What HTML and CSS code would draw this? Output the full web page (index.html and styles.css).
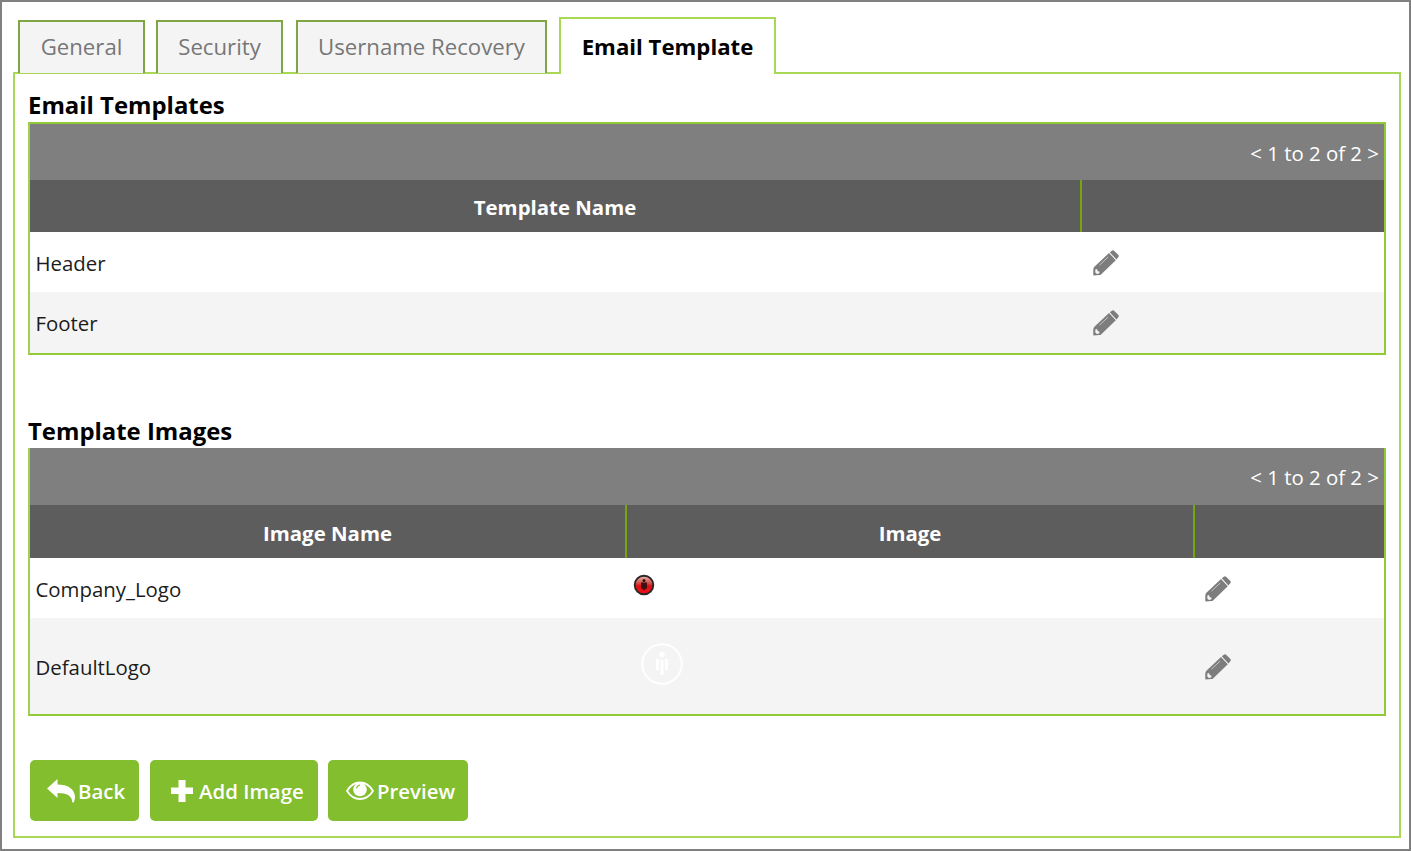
FILE: index.html
```
<!DOCTYPE html>
<html lang="en">
<head>
<meta charset="utf-8">
<title>Email Template</title>
<link rel="stylesheet" href="styles.css">
</head>
<body>
<svg class="defs" width="0" height="0" aria-hidden="true">
  <symbol id="pencil" viewBox="0 0 26 26">
    <path fill="currentColor" d="M16.800 2.300 18.900.7q1.200-.9 2.400.2l3.900 3.900q1.200 1.200.1 2.400l-1.900 2.400zM16 3l6.800 7.200L8.300 24.200q-.8.8-1.800.9L.4 25.500q-.3-3 0-6.700.2-1.200 1-2z"/>
    <path fill="none" stroke="#c4c4c4" stroke-width="1" d="M6.400 15.200 15.200 7"/>
    <path fill="#f4f4f4" d="M2.300 19.400 4 19l.6 2 2 .7-.5 1.900-2.200.400-1.600-1.600z"/>
  </symbol>
</svg>
<main class="window">
  <nav class="tabs">
    <a class="tab general"><span>General</span></a>
    <a class="tab security"><span>Security</span></a>
    <a class="tab username"><span>Username Recovery</span></a>
    <a class="tab active"><span>Email Template</span></a>
  </nav>
  <section class="panel">
    <h2 class="title">Email Templates</h2>
    <div class="grid templates">
      <div class="pager"><span>&lt; 1 to 2 of 2 &gt;</span></div>
      <div class="row head"><div>Template Name</div><div></div></div>
      <div class="row"><div>Header</div><div><svg class="pencil"><use href="#pencil"/></svg></div></div>
      <div class="row alt"><div>Footer</div><div><svg class="pencil"><use href="#pencil"/></svg></div></div>
    </div>
    <h2 class="title second">Template Images</h2>
    <div class="grid images">
      <div class="pager"><span>&lt; 1 to 2 of 2 &gt;</span></div>
      <div class="row head"><div>Image Name</div><div>Image</div><div></div></div>
      <div class="row"><div>Company_Logo</div>
        <div><svg class="logo-small" viewBox="0 0 22 22">
          <defs><linearGradient id="red" x2="0" y2="1"><stop offset="0" stop-color="#e9b9ae"/><stop offset=".4" stop-color="#d3504a"/><stop offset=".55" stop-color="#dc1014"/><stop offset="1" stop-color="#f0121c"/></linearGradient></defs>
          <circle cx="11" cy="11" r="9.300" fill="url(#red)" stroke="#2b2525" stroke-width="1.900"/>
          <circle cx="11" cy="6.600" r="1.500" fill="#301010"/>
          <path fill="#401012" d="M8 8.500h6v5.500l-1.500 1-1.500 1.500-1.500-1.500-1.500-1z"/>
        </svg></div>
        <div><svg class="pencil"><use href="#pencil"/></svg></div></div>
      <div class="row alt tall"><div>DefaultLogo</div>
        <div><svg class="logo-large" viewBox="0 0 42 42">
          <circle cx="21" cy="21" r="19.700" fill="none" stroke="#fff" stroke-width="2"/>
          <circle cx="21" cy="11.500" r="2.700" fill="#fff"/>
          <path stroke="#fff" stroke-width="3" d="M16.500 16v11M21 17v15M25.500 16v11"/>
        </svg></div>
        <div><svg class="pencil"><use href="#pencil"/></svg></div></div>
    </div>
    <div class="actions">
      <button class="button back"><svg viewBox="0 0 28 24"><path fill="#fff" d="M0 9.500 10.500 0v5.500c10 0 17.500 4.500 17.500 12.500 0 2-.5 4-1.500 5.500h-1.300C25.500 17 20 14 10.500 14v5z"/></svg><span>Back</span></button>
      <button class="button add"><svg viewBox="0 0 24 24"><path fill="#fff" d="M8.500 1h7v7.500H23v6.500h-7.500V23h-7v-8H1V8.500h7.500z"/></svg><span>Add Image</span></button>
      <button class="button preview"><svg viewBox="0 0 28 20"><path fill="none" stroke="#fff" stroke-width="1.800" d="M1 10C4.500 4 9 1.500 14 1.500S23.500 4 27 10c-3.500 5.500-8 8-13 8S4.500 15.500 1 10z"/><circle cx="14" cy="8.500" r="6.800" fill="#fff"/><path d="M10.500 7.500q.6-3 3.500-3.500" fill="none" stroke="#82be2d" stroke-width="1.200"/></svg><span>Preview</span></button>
    </div>
  </section>
</main>
</body>
</html>
```
FILE: styles.css
```
* { box-sizing: border-box; }
body { margin: 0; font-family: "Open Sans", sans-serif; font-size: 20.4px; color: #1c1c1c; }
.defs { position: absolute; }
.window { width: 1411px; height: 851px; border: 2px solid #808080; background: #fff; padding: 16px 8px 11px 11px; }
.tabs { display: flex; align-items: flex-end; height: 55px; padding-left: 5px; }
.tab { height: 53px; border: 2px solid #7fa645; border-bottom: 0; background: #f4f4f4; color: #777; font-size: 22.2px; line-height: 49px; text-align: center; white-space: nowrap; }
.general { width: 127px; margin-right: 11px; }
.security { width: 127px; margin-right: 13px; }
.username { width: 251px; margin-right: 12px; }
.active { width: 217px; height: 57px; margin-bottom: -1px; border-color: #a8d855; background: #fff; color: #000; font-weight: 700; line-height: 55px; position: relative; }
.panel { height: 766px; margin-top: -1px; border: 2px solid #a8d855; padding: 15px 14px 0 14px; }
.title { margin: 0 0 0 -1px; height: 33px; font-size: 23.9px; line-height: 32px; font-weight: 700; color: #000; white-space: nowrap; }
.second { margin-top: 60px; }
.grid { width: 1358px; margin-left: -1px; border: 2px solid #92ca37; border-left-color: #a0d050; }
.images { border-top: 0; }
.pager { display: flex; justify-content: flex-end; align-items: center; height: 56px; padding: 1px 5px 0 0; background: #7f7f7f; color: #fff; }
.images .pager { height: 57px; padding-top: 0; }
.row { display: grid; height: 60px; padding-top: 1px; align-items: center; line-height: 28px; }
.templates .row { grid-template-columns: 1050px 1fr; }
.images .row { grid-template-columns: 595px 568px 1fr; }
.row > div { padding-left: 5.5px; }
.row > div:last-child { padding-left: 13px; }
.images .row > div:last-child { padding-left: 12px; }
.row.head { height: 52px; padding: 0; background: #5d5d5d; color: #fff; font-weight: 700; text-align: center; overflow: hidden; }
.images .row.head { height: 53px; }
.row.head > div { height: 100%; line-height: 55px; padding: 0; }
.images .row.head > div { line-height: 57px; }
.row.head > div + div { border-left: 2px solid #76a510; }
.row.alt { height: 61px; background: #f4f4f4; }
.row.tall { height: 96px; }
.pencil { display: block; width: 26px; height: 26px; color: #7d7d7d; }
.logo-small { display: block; width: 22px; height: 22px; margin: -7px 0 0 2.5px; }
.logo-large { display: block; width: 42px; height: 42px; margin: -5px 0 0 10.5px; }
.actions { display: flex; gap: 11px; margin-top: 44px; padding-left: 1px; }
.button { display: flex; align-items: center; height: 61px; padding: 0; border: 0; border-radius: 5px; background: #82be2d; color: #fff; font: 600 20.4px "Open Sans", sans-serif; white-space: nowrap; }
.back { width: 109px; padding-left: 17px; }
.back svg { width: 28px; height: 24px; margin-right: 3px; }
.add { width: 168px; padding-left: 20px; }
.add svg { width: 24px; height: 24px; margin-right: 5px; }
.preview { width: 140px; margin-left: -1px; padding-left: 18px; }
.preview svg { width: 28px; height: 20px; margin-top: 1px; margin-right: 3px; }
```
